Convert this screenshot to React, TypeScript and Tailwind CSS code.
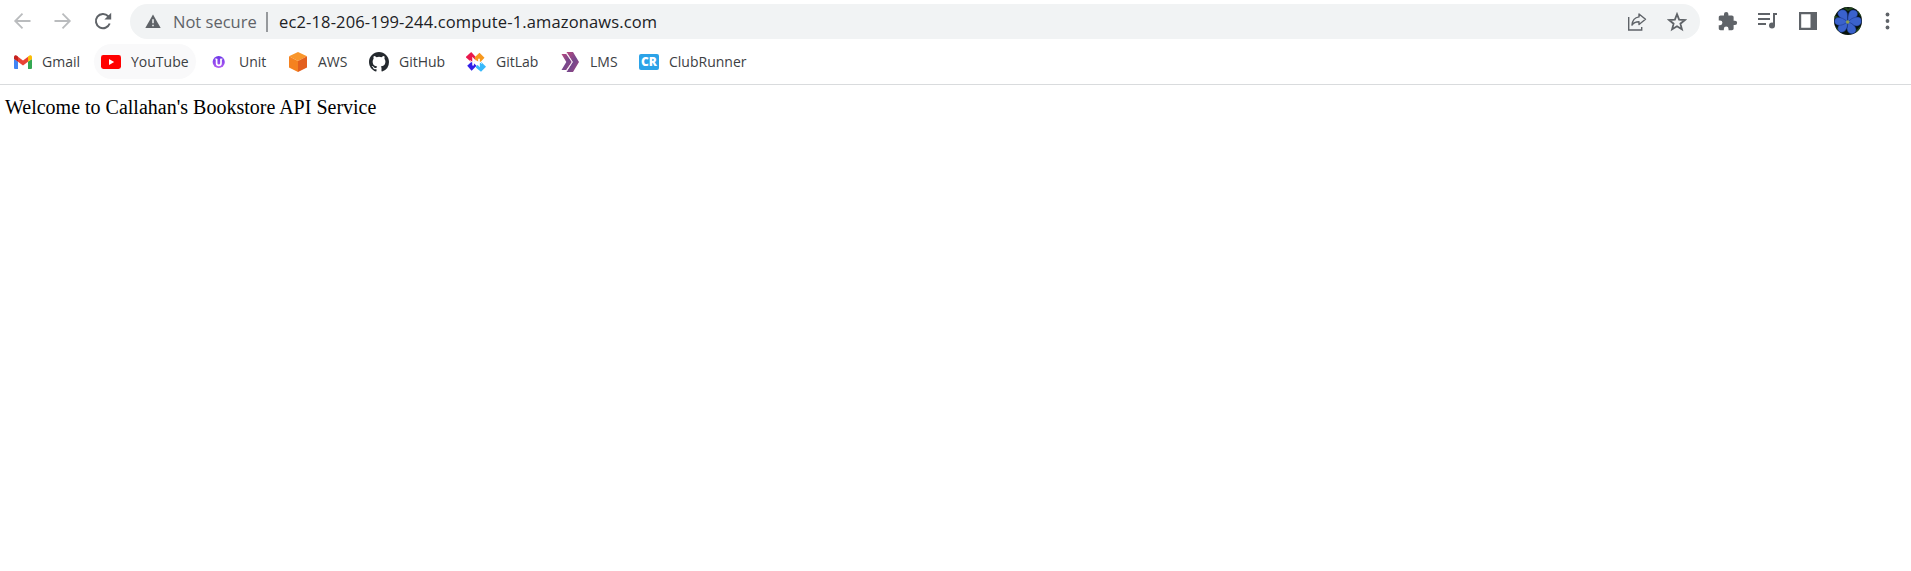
import type { ReactNode } from "react";

const ui = "font-['Open_Sans','Noto_Sans',sans-serif]";

function GmailIcon() {
  return (
    <svg width="20" height="20" viewBox="0 0 20 20">
      <path d="M1 7v9a1 1 0 0 0 1 1h3V9.6z" fill="#4285f4" />
      <path d="M19 7v9a1 1 0 0 1-1 1h-3V9.6z" fill="#34a853" />
      <path d="M5 4.8l5 3.8 5-3.8v5L10 13.5 5 9.8z" fill="#ea4335" />
      <path d="M1 5.2C1 3.3 3 2.8 4.3 3.9L5 4.5v5.3L1 7z" fill="#c5221f" />
      <path d="M19 5.2c0-1.9-2-2.4-3.3-1.3l-.7.6v5.3L19 7z" fill="#fbbc04" />
    </svg>
  );
}

function YouTubeIcon() {
  return (
    <svg width="20" height="20" viewBox="0 0 20 20">
      <rect x="0" y="3" width="20" height="14" rx="2.4" fill="#f00" />
      <path d="M8 7v6l5.2-3z" fill="#fff" />
    </svg>
  );
}

function UnitIcon() {
  return (
    <svg width="20" height="20" viewBox="0 0 20 20">
      <defs>
        <linearGradient id="unit" x1="0" y1="0" x2="0" y2="1">
          <stop offset="0" stopColor="#6a35e8" />
          <stop offset="1" stopColor="#b45cf2" />
        </linearGradient>
      </defs>
      <circle cx="9.7" cy="10" r="6.1" fill="url(#unit)" />
      <path d="M7.6 7v4.200a2.200 2.200 0 0 0 4.400 0V7" fill="none" stroke="#fff" strokeWidth="1.700" />
      <path d="M5.800 7h2.400M11.200 7h2.400" stroke="#fff" strokeWidth="0.800" />
    </svg>
  );
}

function AwsIcon() {
  return (
    <svg width="20" height="20" viewBox="0 0 20 20">
      <path d="M10 0l9 4.2L10 9 1 4.2z" fill="#f9962b" />
      <path d="M1 4.2L10 9v11l-9-4.6z" fill="#f58220" />
      <path d="M19 4.2L10 9v11l9-4.6z" fill="#e35f1e" />
    </svg>
  );
}

function GitHubIcon() {
  return (
    <svg width="20" height="20" viewBox="0 0 16 16" fill="#24292e">
      <path d="M8 0C3.58 0 0 3.58 0 8c0 3.54 2.29 6.53 5.47 7.59.4.07.55-.17.55-.38 0-.19-.01-.82-.01-1.49-2.01.37-2.53-.49-2.69-.94-.09-.23-.48-.94-.82-1.13-.28-.15-.68-.52-.01-.53.63-.01 1.08.58 1.23.82.72 1.21 1.87.87 2.33.66.07-.52.28-.87.51-1.07-1.78-.2-3.64-.89-3.64-3.95 0-.87.31-1.59.82-2.15-.08-.2-.36-1.02.08-2.12 0 0 .67-.21 2.2.82a7.6 7.6 0 0 1 4 0c1.53-1.04 2.2-.82 2.2-.82.44 1.1.16 1.92.08 2.12.51.56.82 1.27.82 2.15 0 3.07-1.87 3.75-3.65 3.95.29.25.54.73.54 1.48 0 1.07-.01 1.93-.01 2.2 0 .21.15.46.55.38A8 8 0 0 0 16 8c0-4.42-3.58-8-8-8z" />
    </svg>
  );
}

function DiamondsIcon() {
  return (
    <svg width="20" height="20" viewBox="0 0 20 20">
      <path d="M0 4.800L5.200 0l4.300 4.800V9L5.200 10 0 5.500z" fill="#e9184c" />
      <path d="M8.500 5.500L13.500.800l5 5L14 10.500 9.500 8z" fill="#f7981d" />
      <path d="M1.200 13.800L5.800 9.500l4.800 4.300-5 5z" fill="#321fe8" />
      <path d="M10 14.500l5-4.700 5 4.900-5 5-5-4z" fill="#38b9fb" />
      <path d="M7.100 13.500V6.800l5.900 6.200V6.800" fill="none" stroke="#fff" strokeWidth="1.700" />
      <path d="M4.200 8.500l2.200 2M15.800 11.500l-2.200-2" stroke="#fff" strokeWidth="1" />
    </svg>
  );
}

function ChevronsIcon() {
  return (
    <svg width="20" height="20" viewBox="0 0 20 20">
      <defs>
        <linearGradient id="chev" x1="0" y1="0" x2="1" y2="1">
          <stop offset="0" stopColor="#b9477e" />
          <stop offset="0.55" stopColor="#75488c" />
          <stop offset="1" stopColor="#a8467f" />
        </linearGradient>
      </defs>
      <path d="M1.500 2h4.700l5.600 8-5.600 8H1.500L6.300 10z" fill="url(#chev)" />
      <path d="M6.500 0h6.500l6 10-6 10H6.500l6.200-10z" fill="url(#chev)" />
      <path d="M6.500 1l5.800 9-5.800 9" fill="none" stroke="#f4e5f0" strokeWidth="0.800" />
    </svg>
  );
}

function ClubIcon() {
  return (
    <span className="flex h-4 w-5 items-center justify-center rounded-[2px] bg-[#2ca3e8] font-['Open_Sans',sans-serif] text-[12px] leading-none font-extrabold text-white">
      CR
    </span>
  );
}

function Bookmark({ icon, label, width, tracking, active = false }: {
  icon: ReactNode;
  label: string;
  width: string;
  tracking: string;
  active?: boolean;
}) {
  return (
    <div className={`flex h-[35px] shrink-0 items-center gap-[10px] rounded-full pl-[7px] ${width} ${active ? "bg-[#f9f9fa]" : ""}`}>
      <span className="flex w-5 shrink-0 justify-center">{icon}</span>
      <span className={`text-[14px] leading-5 whitespace-nowrap text-[#3c4043] ${tracking}`}>{label}</span>
    </div>
  );
}

function Avatar() {
  return (
    <svg width="28" height="28" viewBox="0 0 28 28">
      <defs>
        <clipPath id="face"><circle cx="14" cy="14" r="14" /></clipPath>
      </defs>
      <g clipPath="url(#face)">
        <rect width="28" height="28" fill="#07130d" />
        <path d="M10 0l4 3 6-3M0 9l4 2M22 25l5-5M1 21l4 2M24 4l3 5" stroke="#23471c" strokeWidth="2" fill="none" />
        <g fill="#3a62cc" stroke="#1b3482" strokeWidth="0.5">
          <path d="M13.500 15C8 13 1.500 8 4.500 4.500 8 1 13.500 3 13.500 8z" />
          <path d="M14 15c-.5-6 .5-12 5-12 6 0 5.500 6 2 8.500z" />
          <path d="M14 15c4-5 11-6.500 13-3 2 6-4 8.500-8 6z" />
          <path d="M14 15c6 1.500 10 7 7 10.500-4 3-8 0-8-4z" />
          <path d="M13.500 15c1 6-3 11.500-7.500 10-4.500-3-1-8.500 2.500-9.500z" />
          <path d="M13.500 15C8 19.500 1 19.500.5 14.500c0-5.500 7-5.500 13 .5z" />
        </g>
        <circle cx="13.700" cy="15" r="1.800" fill="#8d9e52" />
      </g>
    </svg>
  );
}

export default function App() {
  return (
    <div className="flex h-[571px] w-full flex-col overflow-hidden bg-white">
      <header className={`flex h-[85px] shrink-0 flex-col border-b border-[#d9dbdd] ${ui}`}>
        <div className="flex h-[43px] items-center">
          <nav className="flex w-[130px] shrink-0 items-center gap-5 pb-px pl-[13px] text-[#babcbe]">
            <svg width="20" height="20" viewBox="0 0 20 20" fill="none" stroke="currentColor" strokeWidth="1.8">
              <path d="M17.500 10H2.500M9.500 2.700L2.200 10l7.300 7.300" />
            </svg>
            <svg width="20" height="20" viewBox="0 0 20 20" fill="none" stroke="currentColor" strokeWidth="1.800">
              <path d="M1.500 10h15M9.500 2.700l7.300 7.300-7.300 7.300" />
            </svg>
            <svg width="20" height="20" viewBox="0 0 20 20" fill="none" stroke="#5f6368" strokeWidth="2">
              <path d="M16.700 12.500A7.100 7.100 0 1 1 15.200 5.200L17 7" />
              <path d="M18.200 1.700v6.800h-6.800z" fill="#5f6368" stroke="none" />
            </svg>
          </nav>

          <div className="flex h-[35px] w-[1570px] shrink-0 items-center rounded-full bg-[#f1f3f4] pr-[13px] pl-[15px]">
            <svg width="16" height="15" viewBox="0 0 16 15" className="shrink-0">
              <path d="M8 .5L15.700 14H.300z" fill="#5f6368" />
              <path d="M8 5.200v4M8 10.700v1.600" stroke="#f1f3f4" strokeWidth="1.500" />
            </svg>
            <span className="ml-[12px] w-[93px] shrink-0 pt-px text-[16.500px] leading-6 whitespace-nowrap text-[#5f6368]">Not secure</span>
            <span className="h-5 w-[2px] shrink-0 bg-[#96999c]" />
            <span className="ml-[11px] flex-1 pt-px text-[16.500px] leading-6 tracking-[0.145px] whitespace-nowrap text-[#202124]">ec2-18-206-199-244.compute-1.amazonaws.com</span>
            <div className="flex shrink-0 items-center gap-5">
              <svg width="20" height="20" viewBox="0 0 20 20" fill="none" stroke="#5f6368" strokeWidth="1.400">
                <path d="M1.700 5v13h13v-3" />
                <path d="M12 2l6.500 5.300-6.500 5.200V9.700c-3.400 0-5.500.8-7 3.400.3-4 2.500-7.500 7-8.200z" strokeLinejoin="round" />
              </svg>
              <svg width="20" height="20" viewBox="0 0 20 20" fill="none" stroke="#5f6368" strokeWidth="1.800">
                <path d="M10 2.200l2.100 5.400 5.800.4-4.500 3.700 1.500 5.600-4.900-3.100-4.900 3.100 1.500-5.600L2.100 8l5.800-.4z" />
              </svg>
            </div>
          </div>

          <div className="flex flex-1 items-center pb-px pl-[17px] text-[#5f6368]">
            <svg width="21" height="21" viewBox="0 0 24 24" fill="currentColor" className="shrink-0">
              <path d="M20.500 11H19V7c0-1.100-.9-2-2-2h-4V3.500a2.500 2.500 0 0 0-5 0V5H4c-1.100 0-2 .9-2 2v3.800h1.500a2.700 2.700 0 0 1 0 5.400H2V20c0 1.100.9 2 2 2h3.800v-1.500a2.700 2.700 0 0 1 5.400 0V22H17c1.100 0 2-.9 2-2v-4h1.500a2.500 2.500 0 0 0 0-5z" />
            </svg>
            <svg width="20" height="20" viewBox="0 0 20 20" className="ml-[20px] shrink-0">
              <path d="M0 3h12M0 8h12M0 13h8" stroke="currentColor" strokeWidth="2" />
              <path d="M19 3h-3v11.500" fill="none" stroke="currentColor" strokeWidth="2" />
              <circle cx="14" cy="14.500" r="3" fill="currentColor" />
            </svg>
            <svg width="18" height="18" viewBox="0 0 18 18" className="ml-[21px] shrink-0">
              <path d="M1.100 1.100h15.800v15.800H1.100z" fill="none" stroke="currentColor" strokeWidth="2.200" />
              <path d="M11.500 0H18v18h-6.500z" fill="currentColor" />
            </svg>
            <span className="ml-[17px] shrink-0"><Avatar /></span>
            <svg width="6" height="18" viewBox="0 0 6 18" fill="currentColor" className="ml-[22px] shrink-0">
              <circle cx="3.500" cy="2.500" r="1.900" />
              <circle cx="3.500" cy="9" r="1.900" />
              <circle cx="3.500" cy="15.500" r="1.900" />
            </svg>
          </div>
        </div>

        <div className="flex h-[37px] items-center pl-[6px]">
          <Bookmark icon={<GmailIcon />} label="Gmail" width="w-[88px]" tracking="tracking-normal -ml-px" />
          <Bookmark icon={<YouTubeIcon />} label="YouTube" width="w-[102px] mr-[6px]" tracking="tracking-normal" active />
          <Bookmark icon={<UnitIcon />} label="Unit" width="w-[79px]" tracking="tracking-normal" />
          <Bookmark icon={<AwsIcon />} label="AWS" width="w-[81px]" tracking="tracking-normal" />
          <Bookmark icon={<GitHubIcon />} label="GitHub" width="w-[97px]" tracking="tracking-normal" />
          <Bookmark icon={<DiamondsIcon />} label="GitLab" width="w-[94px]" tracking="tracking-normal" />
          <Bookmark icon={<ChevronsIcon />} label="LMS" width="w-[79px]" tracking="tracking-normal" />
          <Bookmark icon={<ClubIcon />} label="ClubRunner" width="w-[124px]" tracking="tracking-normal" />
        </div>
      </header>

      <main className="flex-1 px-[5px] pt-[11px] font-['Liberation_Serif',serif] text-[20px] leading-[23px] text-black">
        Welcome to Callahan's Bookstore API Service
      </main>
    </div>
  );
}
